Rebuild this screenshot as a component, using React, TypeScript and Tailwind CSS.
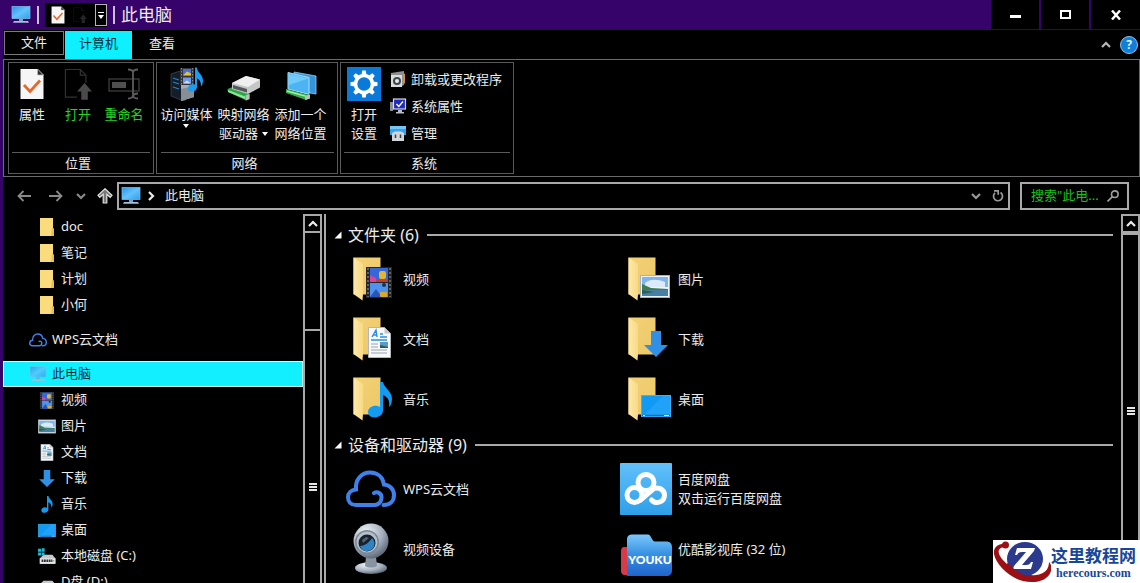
import type { ReactNode } from 'react';
import clsx from 'clsx';

type IconProps = { className?: string };

function PcIcon({ className }: IconProps) {
  return (
    <svg viewBox="0 0 20 18" className={className} aria-hidden="true">
      <defs>
        <linearGradient id="pcScreen" x1="0" y1="0" x2="1" y2="1">
          <stop offset="0" stopColor="#2b93e6" />
          <stop offset="0.5" stopColor="#63c2fb" />
          <stop offset="1" stopColor="#2f9ff0" />
        </linearGradient>
      </defs>
      <rect x="1" y="0.5" width="18" height="12" fill="url(#pcScreen)" stroke="#7fc4ee" strokeWidth="0.7" />
      <rect x="8" y="12.8" width="4" height="2.4" fill="#7da4c0" />
      <path d="M3 15h14l1 1.8H2z" fill="#9fc3dc" />
    </svg>
  );
}

function CheckDocIcon({ className }: IconProps) {
  return (
    <svg viewBox="0 0 24 32" className={className} aria-hidden="true">
      <path d="M0.5 1h17l6 6v24h-23z" fill="#f6f6f6" />
      <path d="M17.5 1v6h6z" fill="#2b2b2b" stroke="#bdbdbd" strokeWidth="0.8" />
      <path d="M4 17l6 6.500L20 12.500" fill="none" stroke="#e5682a" strokeWidth="2.800" />
    </svg>
  );
}

function OpenIcon({ className }: IconProps) {
  return (
    <svg viewBox="0 0 30 34" className={className} aria-hidden="true">
      <path d="M14 31H1.500V1.500h16l6 6V16" fill="none" stroke="#333" strokeWidth="1.200" />
      <path d="M17.500 1.500v6h6" fill="none" stroke="#333" strokeWidth="1.200" />
      <path d="M22 16l8 9h-4.500v9h-7v-9H14z" fill="#4a4a4a" />
    </svg>
  );
}

function RenameIcon({ className }: IconProps) {
  return (
    <svg viewBox="0 0 32 32" className={className} aria-hidden="true">
      <rect x="1" y="11" width="30" height="12" fill="none" stroke="#3d3d3d" strokeWidth="1.300" />
      <rect x="4" y="14" width="14" height="6" fill="#4f4f4f" />
      <path d="M20 1.500c3 0 5 .8 5 3v24c0-2 2-3 5-3M30 1.500c-3 0-5 .8-5 3M25 27c0 2-2 3.500-5 3.500M25 27c0 2 2 3.500 5 3.500" fill="none" stroke="#5c5c5c" strokeWidth="1.800" />
    </svg>
  );
}

function MediaServerIcon({ className }: IconProps) {
  return (
    <svg viewBox="0 0 34 34" className={className} aria-hidden="true">
      <path d="M1 7l9-3 5 2v28l-4-1L1 29z" fill="#141d28" stroke="#4a5560" strokeWidth="0.600" />
      <path d="M11 9l13-3v24l-13 4z" fill="#a7adb3" />
      <path d="M11 22l13-3v11l-13 4z" fill="#868e96" />
      <path d="M3 11l6 2M3 15l6 2M3 20l6 2" stroke="#2a83c4" strokeWidth="1.200" />
      <rect x="10" y="1" width="14" height="17" fill="#33353a" />
      <path d="M11.500 1v17M22.500 1v17" stroke="#83868c" strokeWidth="1" strokeDasharray="1.500 1.500" />
      <rect x="13" y="2" width="8" height="6.500" fill="#4a6fd8" />
      <path d="M13 8.500l4-4 4 2v2z" fill="#e4c23c" />
      <rect x="13" y="10.500" width="8" height="6" fill="#6a9af0" />
      <path d="M13 16.500l4-3 4 3z" fill="#d8dce8" />
      <path d="M25 0.500h2c0 5 6 7 6 13 0 3-1 5-2 6 0-4-1-7-4-8v8c0 6-9 7-9 2 0-4 4-5 7-4z" fill="#1c9cf0" />
    </svg>
  );
}

function NetDriveIcon({ className }: IconProps) {
  return (
    <svg viewBox="0 0 34 26" className={className} aria-hidden="true">
      <path d="M0.500 14l5-2 17 7v5l-3 1.500L1 17z" fill="#2fa648" />
      <path d="M1 15l17 6.500v2.500L1 17z" fill="#8be99a" />
      <path d="M5 8L19 1l14 3.500v8L21 19 5 14z" fill="#c4c6c8" />
      <path d="M5 8L19 1l14 3.500L21 12z" fill="#efefef" />
      <path d="M6 10l14 4v3.500L6 13.500z" fill="#54585c" />
      <path d="M18.500 20.500l4-1.500v5l-4 1.500z" fill="#b7c0b9" />
    </svg>
  );
}

function NetPlaceIcon({ className }: IconProps) {
  return (
    <svg viewBox="0 0 32 30" className={className} aria-hidden="true">
      <path d="M9 1l22 4v18L13 20z" fill="#3594dc" stroke="#8cd1f5" strokeWidth="0.800" />
      <path d="M3 1.500l21 5v17L3 18z" fill="#4db4f3" stroke="#a3defa" strokeWidth="1" />
      <path d="M4 3l19 4.500L4 14z" fill="#70cbfa" />
      <path d="M1 18l19 5 5 1v3.500l-4 1.500L1 22z" fill="#37ab4c" />
      <path d="M2 20l18 5" stroke="#9cf0a8" strokeWidth="1.500" />
      <path d="M20 24.500l5-.8v3.800l-5 1.500z" fill="#b7c0b9" />
    </svg>
  );
}

const teeth = [0, 45, 90, 135, 180, 225, 270, 315];

function SettingsTile({ className }: IconProps) {
  return (
    <svg viewBox="0 0 34 34" className={className} aria-hidden="true">
      <rect width="34" height="34" fill="#0b79d8" />
      <circle cx="17" cy="17" r="8.500" fill="none" stroke="#fff" strokeWidth="3.600" />
      {teeth.map((deg) => (
        <path key={deg} d="M14.500 7.500l.8-4h3.400l.8 4z" fill="#fff" transform={`rotate(${deg} 17 17)`} />
      ))}
    </svg>
  );
}

function UninstallIcon({ className }: IconProps) {
  return (
    <svg viewBox="0 0 16 16" className={className} aria-hidden="true">
      <path d="M1 2l13-2v14l-4 2V4H1z" fill="#8d8f91" />
      <path d="M13 2l2 1v9l-2 2z" fill="#d98b3a" />
      <rect x="1" y="4" width="11" height="12" fill="#d9dcdc" />
      <circle cx="7" cy="10" r="4" fill="#3f4549" />
      <circle cx="7" cy="10" r="2" fill="#e9eced" />
    </svg>
  );
}

function SystemIcon({ className }: IconProps) {
  return (
    <svg viewBox="0 0 16 16" className={className} aria-hidden="true">
      <rect x="0" y="4" width="3" height="9" fill="#8a8f95" />
      <rect x="3.500" y="1" width="12" height="10" fill="#1e28c8" stroke="#d8dae0" strokeWidth="1.200" />
      <path d="M6.500 6l2.300 2.500L13 3.500" fill="none" stroke="#fff" strokeWidth="1.400" />
      <path d="M8 12h4v2h2v1.500H6V14h2z" fill="#b9bdc4" />
    </svg>
  );
}

function ManageIcon({ className }: IconProps) {
  return (
    <svg viewBox="0 0 16 16" className={className} aria-hidden="true">
      <rect x="0" y="1" width="16" height="9" fill="#36a3ee" />
      <rect x="0" y="1" width="16" height="3" fill="#74c6f8" />
      <path d="M2 8l3-1.500h6L14 8v8H2z" fill="#d3d6da" />
      <path d="M5.500 9.500v3.500M10.500 9.500v3.500" stroke="#3a4048" strokeWidth="1.500" />
    </svg>
  );
}

function SmallFolder({ className }: IconProps) {
  return (
    <svg viewBox="0 0 16 18" className={className} aria-hidden="true">
      <path d="M1 0h13v10l1 1v7H1z" fill="#fbdc7c" />
      <path d="M13 9.500l2 1.500v7h-3z" fill="#e9bf55" />
    </svg>
  );
}

function CloudIcon({ className }: IconProps) {
  return (
    <svg viewBox="0 0 50 38" className={className} fill="none" stroke="#3f80ea" strokeWidth="4" strokeLinecap="round" aria-hidden="true">
      <path d="M28 23c4-2 8 1 7.500 5-.3 4-3 7-7 7H10c-5 0-8-3.500-8-7.500C2 23 5 20 10 19.500 9 9 16 2.500 24 2.500c8 0 13 5 14 12 6 .5 10 5 10 10.500 0 6-4 10-10.500 10" />
    </svg>
  );
}

function VideoArt() {
  return (
    <>
      <rect width="26" height="31" fill="#25262a" />
      <path d="M2 1v29M24 1v29" stroke="#777" strokeWidth="1.500" strokeDasharray="2 2" />
      <rect x="4" y="1" width="18" height="14" fill="#3568d8" />
      <path d="M4 8l6 3v4H4z" fill="#d8439c" />
      <rect x="13" y="4" width="7" height="8" rx="2" fill="#e3b62c" />
      <path d="M10 13h12v2H10z" fill="#c33c2c" />
      <rect x="4" y="16" width="18" height="14" fill="#4f93f0" />
      <path d="M4 30l6-8 6 8z" fill="#2a55b8" />
      <rect x="14" y="25" width="7" height="5" rx="1" fill="#d9aa28" />
      <circle cx="18" cy="18" r="2" fill="#23304a" />
    </>
  );
}

function PictureArt() {
  return (
    <>
      <rect x="0.500" y="0.500" width="29" height="22" fill="#f0f3f5" stroke="#a9b2b8" />
      <rect x="2" y="2" width="26" height="10" fill="#7fb5ee" />
      <path d="M5 8c5-4 12-4 20-1v5H5z" fill="#dceafa" />
      <path d="M2 9l9 4 17 1v2H2z" fill="#3f7d4f" />
      <rect x="2" y="15" width="26" height="6" fill="#477fa5" />
      <path d="M2 15l12 2-12 2z" fill="#2b5f52" />
    </>
  );
}

function DocumentArt() {
  return (
    <>
      <path d="M0.500 0.500h16l6 6v24h-22z" fill="#f7f8fa" stroke="#b3b7bd" />
      <path d="M16.500 0.500v6h6z" fill="#c3c7cc" />
      <path d="M4 10l4-7 1 7M5 8h4M12 7h3M12 10h7M3 13h16" fill="none" stroke="#2b8de0" strokeWidth="1.400" />
      <path d="M3 17h7M3 20h7M3 23h16M3 26h16" stroke="#9aa3ae" strokeWidth="1" />
      <rect x="12" y="15" width="8" height="6" fill="#5b9bbf" />
      <path d="M12 18l8 2v1h-8z" fill="#2c5a56" />
    </>
  );
}

function ArrowArt() {
  return <path d="M7 0h10v14h7L12 26 0 14h7z" fill="#2f90e6" />;
}

function NoteArt() {
  return (
    <path d="M12 0h3c1 6 9 9 9 17 0 4-1.500 7-3 8 1-6-1-10-6-12v15c0 9-15 10-15 2 0-5 7-8 12-5z" fill="#139bf2" />
  );
}

function DesktopArt() {
  return (
    <>
      <rect x="0.500" y="0.500" width="29" height="21" fill="#109af4" stroke="#3bb2f8" />
      <path d="M3 20L22 1h7v19z" fill="#1fa2f8" />
      <path d="M1 20.500h28" stroke="#0c6fc0" strokeWidth="1.500" />
      <path d="M2 20.500h2M23 20.500h5" stroke="#cfe9fb" strokeWidth="1" />
    </>
  );
}

function DriveArt() {
  return (
    <>
      <path d="M3 13L9 7h15l5 6v9H3z" fill="#c6c9cc" />
      <path d="M3 13h26v9H3z" fill="#e4e6e8" />
      <path d="M6 17h18" stroke="#2d2f31" strokeWidth="4" strokeDasharray="3 1" />
      <rect x="25" y="16" width="2" height="2" fill="#32c850" />
    </>
  );
}

const art = {
  video: { node: <VideoArt />, box: '0 0 26 31', at: 'translate(13 10)' },
  picture: { node: <PictureArt />, box: '0 0 30 23', at: 'translate(12 18)' },
  doc: { node: <DocumentArt />, box: '0 0 23 31', at: 'translate(15 10)' },
  down: { node: <ArrowArt />, box: '0 0 24 26', at: 'translate(16 14)' },
  music: { node: <NoteArt />, box: '0 0 24 36', at: 'translate(15 5)' },
  desktop: { node: <DesktopArt />, box: '0 0 30 22', at: 'translate(13 18)' },
};

type ArtName = keyof typeof art;

function SmallArt({ name }: { name: ArtName }) {
  return (
    <svg viewBox={art[name].box} className="h-[17px] w-[18px]" aria-hidden="true">
      {art[name].node}
    </svg>
  );
}

function FolderIcon({ name }: { name: ArtName }) {
  return (
    <svg viewBox="0 0 44 44" className="h-11 w-11" aria-hidden="true">
      <defs>
        <linearGradient id="folderBack" x1="0" y1="0" x2="1" y2="1">
          <stop offset="0" stopColor="#f3d277" />
          <stop offset="1" stopColor="#ecc765" />
        </linearGradient>
        <linearGradient id="folderFront" x1="0" y1="0" x2="1" y2="0">
          <stop offset="0" stopColor="#fde9a8" />
          <stop offset="1" stopColor="#f8da86" />
        </linearGradient>
      </defs>
      <path d="M0.500 0.500h27v37h-27z" fill="url(#folderBack)" />
      <path d="M0.500 0.500l9.500 6.500v30l-0.500 6.500-9-6.500z" fill="url(#folderFront)" />
      <g transform={art[name].at}>{art[name].node}</g>
    </svg>
  );
}

function DiskIcon({ windows }: { windows?: boolean }) {
  return (
    <svg viewBox="0 0 30 26" className="h-4 w-[18px]" aria-hidden="true">
      <g transform="translate(0 4)">
        <DriveArt />
      </g>
      {windows && <path d="M0 1h5v5H0zM6 0h5v6H6zM0 7h5v5H0zM6 7h5v5H6z" fill="#19b9d6" />}
    </svg>
  );
}

function WebcamIcon({ className }: IconProps) {
  return (
    <svg viewBox="0 0 36 52" className={className} aria-hidden="true">
      <defs>
        <radialGradient id="camBody" cx="0.350" cy="0.250" r="0.800">
          <stop offset="0" stopColor="#eef2f6" />
          <stop offset="0.600" stopColor="#a3afbc" />
          <stop offset="1" stopColor="#566270" />
        </radialGradient>
      </defs>
      <ellipse cx="18" cy="45" rx="16" ry="6" fill="url(#camBody)" />
      <path d="M13 34h10l1 9c-3 2-9 2-12 0z" fill="#8793a0" />
      <circle cx="18" cy="18" r="17.500" fill="url(#camBody)" />
      <circle cx="14" cy="19" r="12" fill="#7b8794" />
      <circle cx="14" cy="19" r="10.500" fill="#b6c0ca" />
      <circle cx="14" cy="20" r="8.500" fill="#17222e" />
      <path d="M7 23c4 0 9-3 12-8 5 5 2 13-5 13-4 0-6-2-7-5z" fill="#2e83c0" />
      <path d="M9 17l4-3 3 1-6 5z" fill="#55616e" />
    </svg>
  );
}

function BaiduIcon({ className }: IconProps) {
  return (
    <svg viewBox="0 0 52 52" className={className} aria-hidden="true">
      <defs>
        <linearGradient id="baiduTile" x1="0" y1="0" x2="0" y2="1">
          <stop offset="0" stopColor="#62c0fa" />
          <stop offset="1" stopColor="#2e9fe9" />
        </linearGradient>
      </defs>
      <rect width="52" height="52" rx="1" fill="url(#baiduTile)" />
      <g fill="none" stroke="#fff" strokeWidth="5" strokeLinecap="round">
        <circle cx="26" cy="19.500" r="8" />
        <circle cx="14.500" cy="32" r="7.500" />
        <path d="M20.500 37L32 27c5-4.500 12.500-.8 12.500 5 0 7-8.500 10-13 5" />
      </g>
    </svg>
  );
}

function YoukuIcon() {
  return (
    <span className="relative block h-[42px] w-[52px]">
      <svg viewBox="0 0 52 42" className="h-[42px] w-[52px]" aria-hidden="true">
        <defs>
          <linearGradient id="youkuFolder" x1="0" y1="0" x2="0" y2="1">
            <stop offset="0" stopColor="#7cc8fb" />
            <stop offset="0.450" stopColor="#3a93e4" />
            <stop offset="1" stopColor="#1f63cc" />
          </linearGradient>
        </defs>
        <path d="M4 13h6v28H5c-3 0-4-2-4-4V17c0-2 1-4 3-4z" fill="#d93a48" />
        <path d="M12 0.500h16c3 0 4 7 7 7h11c4 0 6 2 6 6V36c0 4-2 6-6 6H7V5c0-3 2-4.500 5-4.500z" fill="url(#youkuFolder)" />
      </svg>
      <span className="absolute right-0 bottom-2 left-2 text-center font-[Lato,sans-serif] text-[12px] leading-4 font-black text-white">
        YOUKU
      </span>
    </span>
  );
}

function Chevron({ className, d }: { className?: string; d: string }) {
  return (
    <svg viewBox="0 0 12 12" className={clsx('h-3 w-3', className)} fill="none" stroke="currentColor" strokeWidth="2.200" aria-hidden="true">
      <path d={d} />
    </svg>
  );
}

const UP = 'M2 8l4-4 4 4';
const DOWN = 'M2 4l4 4 4-4';
const RIGHT = 'M4 2l4 4-4 4';

function Caret() {
  return (
    <svg viewBox="0 0 6 4" className="h-1 w-1.5" aria-hidden="true">
      <path d="M0 0h6L3 4z" fill="#fff" />
    </svg>
  );
}

function TitleBar() {
  return (
    <header className="flex h-[30px] shrink-0 items-center bg-[#350369] pl-2">
      <PcIcon className="h-[18px] w-5" />
      <span className="mx-1.5 h-[18px] w-0.5 bg-[#c9bfd8]" />
      <div className="flex h-6 items-center gap-2 bg-black pl-1.5">
        <button aria-label="属性">
          <CheckDocIcon className="h-[18px] w-3.5" />
        </button>
        <button aria-label="新建文件夹" className="w-3.5 opacity-50">
          <OpenIcon className="h-4 w-3.5" />
        </button>
        <button aria-label="自定义快速访问工具栏" className="flex h-[22px] w-3 flex-col items-center justify-center gap-0.5 border border-[#b5b5b5]">
          <span className="h-px w-1.5 bg-white" />
          <Caret />
        </button>
      </div>
      <span className="mx-1.5 h-[18px] w-0.5 bg-[#c9bfd8]" />
      <h1 className="text-[17px] leading-6">此电脑</h1>
      <div className="ml-auto flex h-[29px] gap-0.5 self-start">
        <button aria-label="最小化" className="flex w-12 items-center justify-center bg-black">
          <span className="mt-1 h-[3px] w-[11px] bg-white" />
        </button>
        <button aria-label="最大化" className="flex w-12 items-center justify-center bg-black">
          <span className="h-[9px] w-[11px] border-2 border-white" />
        </button>
        <button aria-label="关闭" className="flex w-[49px] items-center justify-center bg-black">
          <svg viewBox="0 0 10 10" className="h-2.5 w-2.5" aria-hidden="true">
            <path d="M1 0.500l8 9M9 0.500l-8 9" stroke="#fff" strokeWidth="2.400" />
          </svg>
        </button>
      </div>
    </header>
  );
}

function MenuTabs() {
  return (
    <nav className="flex h-[29px] shrink-0 items-start pt-px pl-px">
      <button className="h-6 w-[60px] border border-[#7a7a7a]">文件</button>
      <button className="ml-px h-7 w-[67px] bg-[#0eefff] pb-0.5 text-[#05303a]">计算机</button>
      <button className="h-[26px] w-[60px]">查看</button>
      <div className="ml-auto flex h-7 items-center gap-2 pr-0.5">
        <button aria-label="折叠功能区" className="text-[#b8b8b8]">
          <Chevron d={UP} />
        </button>
        <button
          aria-label="帮助"
          className="flex h-[18px] w-[18px] items-center justify-center rounded-full border border-[#8fc1e8] bg-[#0f7fdc] text-xs font-bold"
        >
          ?
        </button>
      </div>
    </nav>
  );
}

function Group({ label, className, children }: { label: string; className: string; children: ReactNode }) {
  return (
    <section className={clsx('flex flex-col border border-[#5a5a5a] pt-1', className)}>
      <div className="flex flex-1 items-start">{children}</div>
      <h2 className="mx-[3px] h-[21px] border-t border-[#5a5a5a] pr-1.5 text-center leading-5">{label}</h2>
    </section>
  );
}

function BigButton({
  icon,
  lines,
  className,
  caret,
}: {
  icon: ReactNode;
  lines: string[];
  className: string;
  caret?: 'below' | 'inline';
}) {
  return (
    <button className={clsx('flex shrink-0 flex-col items-center gap-1', className)}>
      <span className="flex h-[34px] items-center justify-center">{icon}</span>
      <span className="flex flex-col items-center leading-[19px] whitespace-nowrap">
        {lines.map((line, i) => (
          <span key={line} className="flex items-center gap-1">
            {line}
            {caret === 'inline' && i === lines.length - 1 && <Caret />}
          </span>
        ))}
        {caret === 'below' && <Caret />}
      </span>
    </button>
  );
}

function Ribbon() {
  return (
    <div className="flex h-[118px] shrink-0 gap-0.5 border border-[#6b6b6b] py-0.5 pl-1">
      <Group label="位置" className="w-[146px]">
        <BigButton className="w-[46px]" icon={<CheckDocIcon className="h-8 w-6" />} lines={['属性']} />
        <BigButton className="w-[46px] text-[#25d325]" icon={<OpenIcon className="h-8 w-7" />} lines={['打开']} />
        <BigButton className="w-[46px] text-[#25d325]" icon={<RenameIcon className="h-8 w-8" />} lines={['重命名']} />
      </Group>
      <Group label="网络" className="w-[182px] pl-px">
        <BigButton className="w-[57px]" icon={<MediaServerIcon className="h-[34px] w-[34px]" />} lines={['访问媒体']} caret="below" />
        <BigButton className="w-[57px]" icon={<NetDriveIcon className="mt-2 h-[26px] w-[34px]" />} lines={['映射网络', '驱动器']} caret="inline" />
        <BigButton className="w-[57px]" icon={<NetPlaceIcon className="mt-1 h-[30px] w-8" />} lines={['添加一个', '网络位置']} />
      </Group>
      <Group label="系统" className="w-[174px]">
        <BigButton className="w-[46px]" icon={<SettingsTile className="h-[34px] w-[34px]" />} lines={['打开', '设置']} />
        <div className="ml-0.5 flex flex-col gap-[7px] pt-0.5">
          <button className="flex items-center gap-1 leading-5">
            <UninstallIcon className="h-4 w-[18px]" />
            卸载或更改程序
          </button>
          <button className="flex items-center gap-1 leading-5">
            <SystemIcon className="h-4 w-[18px]" />
            系统属性
          </button>
          <button className="flex items-center gap-1 leading-5">
            <ManageIcon className="h-4 w-[18px]" />
            管理
          </button>
        </div>
      </Group>
    </div>
  );
}

function AddressRow() {
  return (
    <div className="flex h-[37px] shrink-0 items-center pr-[11px] pl-3.5">
      <div className="flex w-[100px] items-center text-[#8a8a8a]">
        <button aria-label="后退">
          <svg viewBox="0 0 14 12" className="h-3 w-3.5" fill="none" stroke="currentColor" strokeWidth="1.800" aria-hidden="true">
            <path d="M14 6H1.500M6.500 1l-5 5 5 5" />
          </svg>
        </button>
        <button aria-label="前进" className="ml-[18px]">
          <svg viewBox="0 0 14 12" className="h-3 w-3.5" fill="none" stroke="currentColor" strokeWidth="1.800" aria-hidden="true">
            <path d="M0 6h12.500M7.500 1l5 5-5 5" />
          </svg>
        </button>
        <button aria-label="最近浏览的位置" className="ml-3">
          <Chevron d={DOWN} className="h-2.5 w-2.5" />
        </button>
        <button aria-label="上移" className="ml-2.5">
          <svg viewBox="0 0 16 16" className="h-4 w-4" aria-hidden="true">
            <path d="M8 0.800l7 6.500-1.800 2-3.400-3V15H6.200V6.300l-3.400 3-1.800-2z" fill="#777" stroke="#e2e2e2" strokeWidth="1.200" />
          </svg>
        </button>
      </div>
      <div className="flex h-7 flex-1 items-center border-2 border-[#a9a9a9] pr-1 pl-0.5">
        <PcIcon className="h-[18px] w-5" />
        <Chevron d={RIGHT} className="ml-1 h-2.5 w-2.5" />
        <span className="ml-2 flex-1">此电脑</span>
        <button aria-label="以前的位置" className="text-[#9a9a9a]">
          <Chevron d={DOWN} />
        </button>
        <button aria-label="刷新" className="ml-2.5 text-[#9a9a9a]">
          <svg viewBox="0 0 12 12" className="h-3 w-3" fill="none" stroke="currentColor" strokeWidth="1.700" aria-hidden="true">
            <path d="M8.500 2.500a4.500 4.500 0 1 1-5.500.4" />
            <path d="M2 0.800h4.200v4" />
          </svg>
        </button>
      </div>
      <label className="ml-2.5 flex h-7 w-[109px] items-center border-2 border-[#a9a9a9] pr-2 pl-[9px]">
        <input
          type="text"
          aria-label="搜索此电脑"
          placeholder={'搜索"此电...'}
          className="w-full min-w-0 flex-1 bg-transparent outline-none placeholder:text-[#12c412]"
        />
        <svg viewBox="0 0 12 12" className="h-3 w-3 shrink-0 text-[#a0a0a0]" fill="none" stroke="currentColor" strokeWidth="1.600" aria-hidden="true">
          <circle cx="7.800" cy="4.200" r="3.300" />
          <path d="M5.400 6.600L0.500 11.500" />
        </svg>
      </label>
    </div>
  );
}

function TreeRow({ icon, label, level = 2, selected }: { icon: ReactNode; label: string; level?: 1 | 2; selected?: boolean }) {
  return (
    <li>
      <a
        href="#"
        className={clsx(
          'flex h-[26px] items-center whitespace-nowrap',
          level === 1 ? 'gap-[5px] pl-[26px]' : 'gap-[5px] pl-[35px]',
          selected && 'border border-[#c8fbff] bg-[#12efff] pl-[25px]! text-[#05303a]'
        )}
      >
        <span className="flex w-[18px] justify-center">{icon}</span>
        {label}
      </a>
    </li>
  );
}

const quickFolders = ['doc', '笔记', '计划', '小何'];

const libraries: { name: ArtName; label: string }[] = [
  { name: 'video', label: '视频' },
  { name: 'picture', label: '图片' },
  { name: 'doc', label: '文档' },
  { name: 'down', label: '下载' },
  { name: 'music', label: '音乐' },
  { name: 'desktop', label: '桌面' },
];

function Sidebar() {
  return (
    <aside className="w-[300px] shrink-0 overflow-hidden">
      <ul>
        {quickFolders.map((label) => (
          <TreeRow key={label} icon={<SmallFolder className="h-[18px] w-4" />} label={label} />
        ))}
      </ul>
      <ul className="mt-[9px]">
        <TreeRow level={1} icon={<CloudIcon className="h-4 w-[18px]" />} label="WPS云文档" />
      </ul>
      <ul className="mt-2">
        <TreeRow level={1} selected icon={<PcIcon className="h-4 w-[18px] opacity-80" />} label="此电脑" />
        {libraries.map((lib) => (
          <TreeRow key={lib.name} icon={<SmallArt name={lib.name} />} label={lib.label} />
        ))}
        <TreeRow icon={<DiskIcon windows />} label="本地磁盘 (C:)" />
        <TreeRow icon={<DiskIcon />} label="D盘 (D:)" />
      </ul>
    </aside>
  );
}

function Grip() {
  return (
    <span className="flex flex-col gap-px">
      <span className="h-0.5 w-2 bg-[#e5e5e5]" />
      <span className="h-0.5 w-2 bg-[#e5e5e5]" />
      <span className="h-0.5 w-2 bg-[#e5e5e5]" />
    </span>
  );
}

// the thumb runs on below the visible part of the window
function ScrollBar({ trackClass, thumbClass }: { trackClass: string; thumbClass: string }) {
  return (
    <div className="flex w-[19px] shrink-0 flex-col overflow-hidden border-x-2 border-[#a9a9a9]">
      <button aria-label="向上滚动" className="flex h-[19px] shrink-0 items-center justify-center border-y-2 border-[#a9a9a9]">
        <Chevron d={UP} className="h-2.5 w-2.5" />
      </button>
      <div className={clsx('shrink-0', trackClass)} />
      <div className={clsx('flex shrink-0 items-center justify-center border-t-2 border-[#a9a9a9]', thumbClass)}>
        <Grip />
      </div>
    </div>
  );
}

function Section({ title, children }: { title: string; children: ReactNode }) {
  return (
    <section>
      <h2 className="flex h-[27px] items-center text-base whitespace-nowrap">
        <svg viewBox="0 0 8 8" className="mr-1.5 h-2 w-2" aria-hidden="true">
          <path d="M7.500 0.500v7h-7z" fill="#fff" />
        </svg>
        {title}
        <span className="ml-2 h-0.5 flex-1 bg-[#a9a9a9]" />
      </h2>
      <ul className="grid grid-cols-[repeat(auto-fill,275px)] pt-px pl-[11px]">{children}</ul>
    </section>
  );
}

function Tile({ icon, lines }: { icon: ReactNode; lines: string[] }) {
  return (
    <li className="flex h-[60px] items-center">
      <span className="flex w-[52px] justify-center">{icon}</span>
      <a href="#" className="ml-1.5 flex flex-col leading-[19px] whitespace-nowrap">
        {lines.map((line) => (
          <span key={line}>{line}</span>
        ))}
      </a>
    </li>
  );
}

const folderTiles: ArtName[] = ['video', 'picture', 'doc', 'down', 'music', 'desktop'];

function Content() {
  return (
    <main className="flex min-w-0 flex-1 flex-col gap-0.5 overflow-hidden border-l-2 border-[#a9a9a9] pt-[7px] pr-2 pl-2">
      <Section title="文件夹 (6)">
        {folderTiles.map((name) => (
          <Tile
            key={name}
            icon={
              <span className="pl-2">
                <FolderIcon name={name} />
              </span>
            }
            lines={[libraries.find((l) => l.name === name)!.label]}
          />
        ))}
      </Section>
      <Section title="设备和驱动器 (9)">
        <Tile icon={<CloudIcon className="h-[38px] w-[50px]" />} lines={['WPS云文档']} />
        <Tile icon={<BaiduIcon className="h-[52px] w-[52px]" />} lines={['百度网盘', '双击运行百度网盘']} />
        <Tile icon={<WebcamIcon className="h-[52px] w-9" />} lines={['视频设备']} />
        <Tile
          icon={
            <span className="pt-3">
              <YoukuIcon />
            </span>
          }
          lines={['优酷影视库 (32 位)']}
        />
      </Section>
    </main>
  );
}

function SiteMark() {
  return (
    <div className="absolute right-0 bottom-0 flex h-[43px] w-[147px] items-center bg-white pr-1">
      <svg viewBox="0 0 58 43" className="h-[43px] w-[58px] shrink-0" aria-hidden="true">
        <path d="M13 4C5 3 0 8 1 14c2 11 16 24 29 27 12 3 25 0 28-10 1-4 0-7-2-9 0 7-4 12-13 13-13 2-30-9-36-19-3-5-1-9 6-9z" fill="#9a1015" />
        <circle cx="12.500" cy="5" r="3.500" fill="#9a1015" />
        <ellipse cx="32" cy="19" rx="18" ry="17" fill="#2b3a8c" />
        <path d="M24 8h18l-1 3-12 14h4c3 0 4-1 5-3h2l-2 7H20l1-3L33 12h-4c-3 0-4 1-5 3h-2z" fill="#fff" />
        <path d="M15 23c6 7 15 13 25 15 7 0 13-3 16-9-1 8-8 12-16 12C28 41 18 33 12 25z" fill="#9a1015" />
      </svg>
      <div className="flex flex-1 flex-col items-center">
        <span className="font-['Noto_Sans_CJK_SC',sans-serif] text-[17px] leading-[22px] font-bold whitespace-nowrap text-[#17479a]">
          这里教程网
        </span>
        <span className="font-['Liberation_Serif',serif] text-[12px] leading-[14px] font-bold text-[#17479a]">
          herecours.com
        </span>
      </div>
    </div>
  );
}

export default function App() {
  return (
    <div className="relative flex h-screen flex-col overflow-hidden border-l-[3px] border-[#350369] bg-black font-['Noto_Sans','Noto_Sans_CJK_SC',sans-serif] text-[13px] text-[#ececec]">
      <TitleBar />
      <MenuTabs />
      <Ribbon />
      <AddressRow />
      <div className="flex min-h-0 flex-1">
        <Sidebar />
        <ScrollBar trackClass="h-24" thumbClass="h-[314px]" />
        <div className="ml-0.5 flex min-w-0 flex-1">
          <Content />
          <ScrollBar trackClass="h-0" thumbClass="h-[354px]" />
        </div>
      </div>
      <SiteMark />
    </div>
  );
}
